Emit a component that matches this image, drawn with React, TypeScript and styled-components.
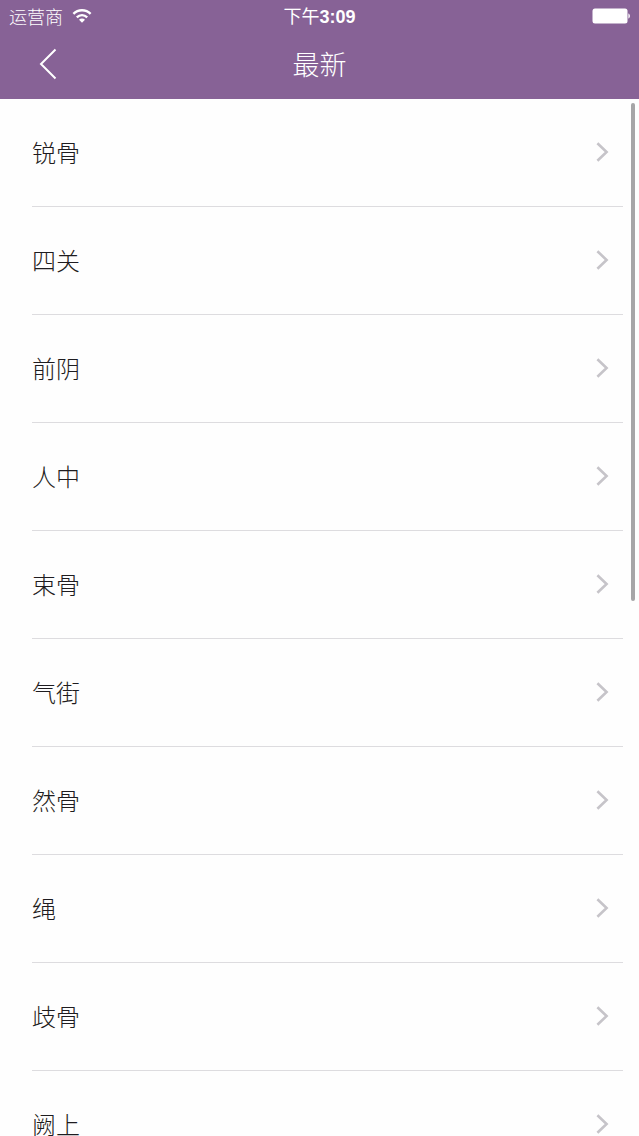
import React from "react";
import styled, { createGlobalStyle } from "styled-components";

const GlobalStyle = createGlobalStyle`
  * { box-sizing: border-box; }
  body {
    margin: 0;
    background: #fefefe;
    font-family: "Noto Sans CJK SC", "Noto Sans", sans-serif;
    font-weight: 300;
  }
`;

const Screen = styled.div`
  display: flex;
  flex-direction: column;
  height: 100vh;
`;

const Header = styled.header`
  flex: none;
  background: #876296;
  color: #fff;
`;

const Bar = styled.div<{ $height: number; $padding: string }>`
  display: grid;
  grid-template-columns: 1fr auto 1fr;
  align-items: center;
  height: ${(p) => p.$height}px;
  padding: ${(p) => p.$padding};
`;

const Carrier = styled.div`
  display: flex;
  align-items: center;
  gap: 9px;
  font-size: 18px;
  line-height: 24px;
`;

const Clock = styled.time`
  padding-top: 1px;
  font-family: "Liberation Sans", "Noto Sans CJK SC", sans-serif;
  font-size: 18px;
  font-weight: 400;
  line-height: 24px;
`;

const Digits = styled.span`
  font-weight: 700;
`;

const Battery = styled.svg`
  justify-self: end;
`;

const BackButton = styled.button`
  display: flex;
  justify-self: start;
  padding: 4px 8px;
  border: 0;
  background: none;
  color: inherit;
  cursor: pointer;
`;

const Title = styled.h1`
  margin: 0;
  font-size: 27px;
  font-weight: 300;
  line-height: 36px;
`;

const Content = styled.main`
  position: relative;
  flex: 1;
  min-height: 0;
`;

const List = styled.ul`
  height: 100%;
  margin: 0;
  padding: 0 16px 0 32px;
  overflow-y: auto;
  scrollbar-width: none;
  list-style: none;
`;

const Row = styled.li`
  border-bottom: 1px solid #dddcdf;
`;

const RowLink = styled.a`
  display: flex;
  align-items: center;
  justify-content: space-between;
  height: 107px;
  padding: 0 14px 2px 0;
  color: #1e1c20;
  font-size: 24px;
  line-height: 36px;
  text-decoration: none;
`;

const ScrollThumb = styled.div`
  position: absolute;
  top: 4px;
  right: 4px;
  width: 4px;
  height: 48%;
  border-radius: 2px;
  background: #a6a5a7;
`;

const names = ["锐骨", "四关", "前阴", "人中", "束骨", "气街", "然骨", "绳", "歧骨", "阙上"];

const WifiIcon = () => (
  <svg width="20" height="15" viewBox="0 0 20 15" fill="none" stroke="#fff" strokeWidth="2.4" aria-hidden="true">
    <path d="M1.4 4.9C6.2 0 13.8 0 18.6 4.9" />
    <path d="M4.8 8.3c3-2.9 7.4-2.9 10.4 0" />
    <path d="M7 10.7c1.8-1.6 4.2-1.6 6 0l-3 3z" fill="#fff" stroke="none" />
  </svg>
);

const Chevron = () => (
  <svg width="13" height="20" viewBox="0 0 13 20" fill="none" stroke="#c6c4c9" strokeWidth="2.6" aria-hidden="true">
    <path d="M1.4 1.2 10.6 10 1.4 18.8" />
  </svg>
);

export default function App() {
  return (
    <>
      <GlobalStyle />
      <Screen>
        <Header>
          <Bar $height={32} $padding="0 9px">
            <Carrier>
              运营商
              <WifiIcon />
            </Carrier>
            <Clock>
              下午<Digits>3:09</Digits>
            </Clock>
            <Battery width="38" height="16" viewBox="0 0 38 16" fill="#fff" role="img" aria-label="电池">
              <rect x="0.5" y="0.5" width="35" height="15" rx="2.5" />
              <path d="M36.4 5.5c2 .6 2 4.4 0 5z" />
            </Battery>
          </Bar>
          <Bar $height={67} $padding="0 31px 4px">
            <BackButton type="button" aria-label="返回">
              <svg width="18" height="32" viewBox="0 0 18 32" fill="none" stroke="#fff" strokeWidth="2" aria-hidden="true">
                <path d="M16.5 1.5 2 16l14.5 14.5" />
              </svg>
            </BackButton>
            <Title>最新</Title>
          </Bar>
        </Header>
        <Content>
          <List>
            {names.map((name) => (
              <Row key={name}>
                <RowLink href="#">
                  {name}
                  <Chevron />
                </RowLink>
              </Row>
            ))}
          </List>
          <ScrollThumb />
        </Content>
      </Screen>
    </>
  );
}
